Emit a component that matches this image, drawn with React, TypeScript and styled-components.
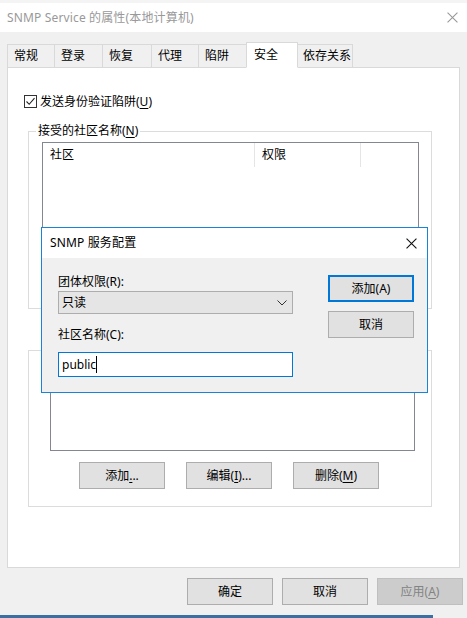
import React from "react";
import styled, { createGlobalStyle } from "styled-components";

const Global = createGlobalStyle`
  html, body { margin: 0; padding: 0; background: #f0f0f0; }
  body { font-family: "Noto Sans", "Noto Sans CJK SC", sans-serif; font-size: 12px; color: #000; }
  * { box-sizing: border-box; }
`;

const Screen = styled.div`
  position: relative;
  width: 467px;
  height: 618px;
  overflow: hidden;
  background: #f0f0f0;
  display: flex;
  flex-direction: column;
`;

const TopStrip = styled.div`
  height: 3px;
  background: #f4f4f4;
`;

const TitleBar = styled.div`
  height: 29px;
  background: #fff;
  display: flex;
  align-items: center;
  justify-content: space-between;
  padding: 0 9px 0 7px;
`;

const TitleText = styled.span<{ $active?: boolean }>`
  font-size: 12px;
  line-height: 16px;
  color: ${(p) => (p.$active ? "#000" : "#999")};
  letter-spacing: 0.15px;
`;

const Tabs = styled.div`
  display: flex;
  align-items: flex-end;
  margin: 10px 0 -1px 7px;
  height: 26px;
  position: relative;
  z-index: 1;
`;

const Tab = styled.div<{ $sel?: boolean; $w: number }>`
  width: ${(p) => p.$w}px;
  height: ${(p) => (p.$sel ? 26 : 24)}px;
  margin: ${(p) => (p.$sel ? "0 -1px 0 -1px" : "0")};
  background: ${(p) => (p.$sel ? "#fff" : "#f0f0f0")};
  border: 1px solid #d9d9d9;
  border-bottom: ${(p) => (p.$sel ? "1px solid #fff" : "1px solid #d9d9d9")};
  border-left: ${(p) => (p.$sel ? "1px solid #d9d9d9" : "none")};
  position: relative;
  z-index: ${(p) => (p.$sel ? 2 : 1)};
  padding-left: ${(p) => (p.$sel ? 7 : 6)}px;
  display: flex;
  align-items: center;
  line-height: 16px;
  &:first-child { border-left: 1px solid #d9d9d9; }
`;

const Panel = styled.div`
  margin-left: 7px;
  width: 453px;
  height: 501px;
  background: #fff;
  border: 1px solid #d9d9d9;
  display: flex;
  flex-direction: column;
`;

const CheckRow = styled.div`
  display: flex;
  align-items: center;
  margin: 27px 0 0 16px;
  height: 13px;
  gap: 3px;
  line-height: 16px;
`;

const CheckBox = styled.div`
  width: 13px;
  height: 13px;
  border: 1px solid #333;
  background: #fff;
  display: flex;
  align-items: center;
  justify-content: center;
`;

const U = styled.span`
  text-decoration: underline;
  text-underline-offset: 2px;
`;

const Group = styled.div<{ $top: number; $h: number; $pl: number }>`
  position: relative;
  margin: ${(p) => p.$top}px 0 0 20px;
  width: 404px;
  height: ${(p) => p.$h}px;
  border: 1px solid #dcdcdc;
  padding: 10px 0 0 ${(p) => p.$pl}px;
  display: flex;
  flex-direction: column;
`;

const Legend = styled.span`
  position: absolute;
  top: -9px;
  left: 7px;
  background: #fff;
  padding: 0 2px;
  line-height: 16px;
`;

const ListView = styled.div<{ $w: number; $h: number; $mt?: number }>`
  width: ${(p) => p.$w}px;
  height: ${(p) => p.$h}px;
  margin-top: ${(p) => p.$mt ?? 0}px;
  border: 1px solid #828790;
  background: #fff;
`;

const Header = styled.div`
  display: flex;
  height: 24px;
`;

const HeadCell = styled.div<{ $w?: number }>`
  width: ${(p) => (p.$w ? `${p.$w}px` : "auto")};
  flex: ${(p) => (p.$w ? "none" : "1")};
  border-right: ${(p) => (p.$w ? "1px solid #e5e5e5" : "none")};
  padding-left: 7px;
  display: flex;
  align-items: center;
  line-height: 16px;
`;

const BtnRow = styled.div<{ $gap: number; $mt: number; $pl?: number; $pr?: number; $end?: boolean }>`
  display: flex;
  gap: ${(p) => p.$gap}px;
  margin-top: ${(p) => p.$mt}px;
  padding-left: ${(p) => p.$pl ?? 0}px;
  padding-right: ${(p) => p.$pr ?? 0}px;
  justify-content: ${(p) => (p.$end ? "flex-end" : "flex-start")};
`;

const Button = styled.div<{ $w?: number; $h?: number; $def?: boolean; $disabled?: boolean }>`
  width: ${(p) => p.$w ?? 86}px;
  height: ${(p) => p.$h ?? 27}px;
  background: ${(p) => (p.$disabled ? "#cccccc" : "#e1e1e1")};
  border: ${(p) => (p.$def ? "2px solid #0078d7" : p.$disabled ? "1px solid #bfbfbf" : "1px solid #adadad")};
  color: ${(p) => (p.$disabled ? "#838383" : "#000")};
  display: flex;
  align-items: center;
  justify-content: center;
  line-height: 16px;
`;

const BottomBar = styled.div`
  position: absolute;
  left: 0;
  bottom: 0;
  width: 433px;
  height: 3px;
  background: #3b6ea3;
`;

/* Overlay dialog */
const Dialog = styled.div`
  position: absolute;
  left: 41px;
  top: 227px;
  width: 387px;
  height: 166px;
  border: 1px solid #1883d7;
  background: #f0f0f0;
  display: flex;
  flex-direction: column;
  z-index: 5;
`;

const DialogTitle = styled.div`
  height: 30px;
  background: #fff;
  display: flex;
  align-items: center;
  justify-content: space-between;
  padding: 0 10px 0 8px;
`;

const DialogBody = styled.div`
  display: flex;
  padding: 16px 0 0 16px;
  gap: 35px;
`;

const Col = styled.div`
  display: flex;
  flex-direction: column;
`;

const Label = styled.div<{ $mt?: number }>`
  line-height: 16px;
  margin-top: ${(p) => p.$mt ?? 0}px;
`;

const Select = styled.div`
  margin-top: 1px;
  width: 235px;
  height: 23px;
  background: #e5e5e5;
  border: 1px solid #adadad;
  display: flex;
  align-items: center;
  justify-content: space-between;
  padding: 0 5px 0 3px;
  line-height: 16px;
`;

const Input = styled.div`
  margin-top: 9px;
  width: 235px;
  height: 25px;
  background: #fff;
  border: 1px solid #0078d7;
  display: flex;
  align-items: center;
  padding-left: 3px;
  line-height: 16px;
`;

const Caret = styled.span`
  display: inline-block;
  width: 1px;
  height: 17px;
  background: #000;
`;

const RightCol = styled.div`
  display: flex;
  flex-direction: column;
  gap: 9px;
  padding-top: 1px;
`;

const XIcon = ({ color, size }: { color: string; size: number }) => (
  <svg width={size} height={size} viewBox="0 0 10 10">
    <path d="M0.5 0.5 L9.5 9.5 M9.5 0.5 L0.5 9.5" stroke={color} strokeWidth="1" fill="none" />
  </svg>
);

const tabs: [string, number][] = [
  ["常规", 48],
  ["登录", 48],
  ["恢复", 49],
  ["代理", 47],
  ["陷阱", 48],
  ["安全", 52],
  ["依存关系", 56],
];

export default function App() {
  return (
    <>
      <Global />
      <Screen>
        <TopStrip />
        <TitleBar>
          <TitleText>SNMP Service 的属性(本地计算机)</TitleText>
          <XIcon color="#999" size={11} />
        </TitleBar>
        <Tabs>
          {tabs.map(([t, w]) => (
            <Tab key={t} $w={w} $sel={t === "安全"}>
              {t}
            </Tab>
          ))}
        </Tabs>
        <Panel>
          <CheckRow>
            <CheckBox>
              <svg width="11" height="11" viewBox="0 0 11 11">
                <path d="M1.5 5.5 L4.2 8.3 L9.5 2.2" stroke="#222" strokeWidth="1.1" fill="none" />
              </svg>
            </CheckBox>
            <span>
              发送身份验证陷阱(<U>U</U>)
            </span>
          </CheckRow>
          <Group $top={23} $h={178} $pl={13}>
            <Legend>
              接受的社区名称(<U>N</U>)
            </Legend>
            <ListView $w={377} $h={156}>
              <Header>
                <HeadCell $w={212}>社区</HeadCell>
                <HeadCell $w={106}>权限</HeadCell>
                <HeadCell />
              </Header>
            </ListView>
          </Group>
          <Group $top={41} $h={157} $pl={21}>
            <ListView $w={365} $h={73} $mt={17} />
            <BtnRow $gap={21} $mt={11} $pl={29}>
              <Button>
                添加<U>.</U>..
              </Button>
              <Button>
                编辑(<U>I</U>)...
              </Button>
              <Button>
                删除(<U>M</U>)
              </Button>
            </BtnRow>
          </Group>
        </Panel>
        <BtnRow $gap={9} $mt={10} $pr={4} $end>
          <Button>确定</Button>
          <Button>取消</Button>
          <Button $disabled>
            应用(<U>A</U>)
          </Button>
        </BtnRow>
        <BottomBar />

        <Dialog>
          <DialogTitle>
            <TitleText $active>SNMP 服务配置</TitleText>
            <XIcon color="#111" size={11} />
          </DialogTitle>
          <DialogBody>
            <Col>
              <Label>团体权限(R):</Label>
              <Select>
                <span>只读</span>
                <svg width="10" height="6" viewBox="0 0 10 6">
                  <path d="M0.5 0.5 L5 5 L9.5 0.5" stroke="#333" strokeWidth="1" fill="none" />
                </svg>
              </Select>
              <Label $mt={13}>社区名称(C):</Label>
              <Input>
                <span>public</span>
                <Caret />
              </Input>
            </Col>
            <RightCol>
              <Button $def $w={86} $h={27}>
                添加(A)
              </Button>
              <Button $w={86} $h={27}>
                取消
              </Button>
            </RightCol>
          </DialogBody>
        </Dialog>
      </Screen>
    </>
  );
}
